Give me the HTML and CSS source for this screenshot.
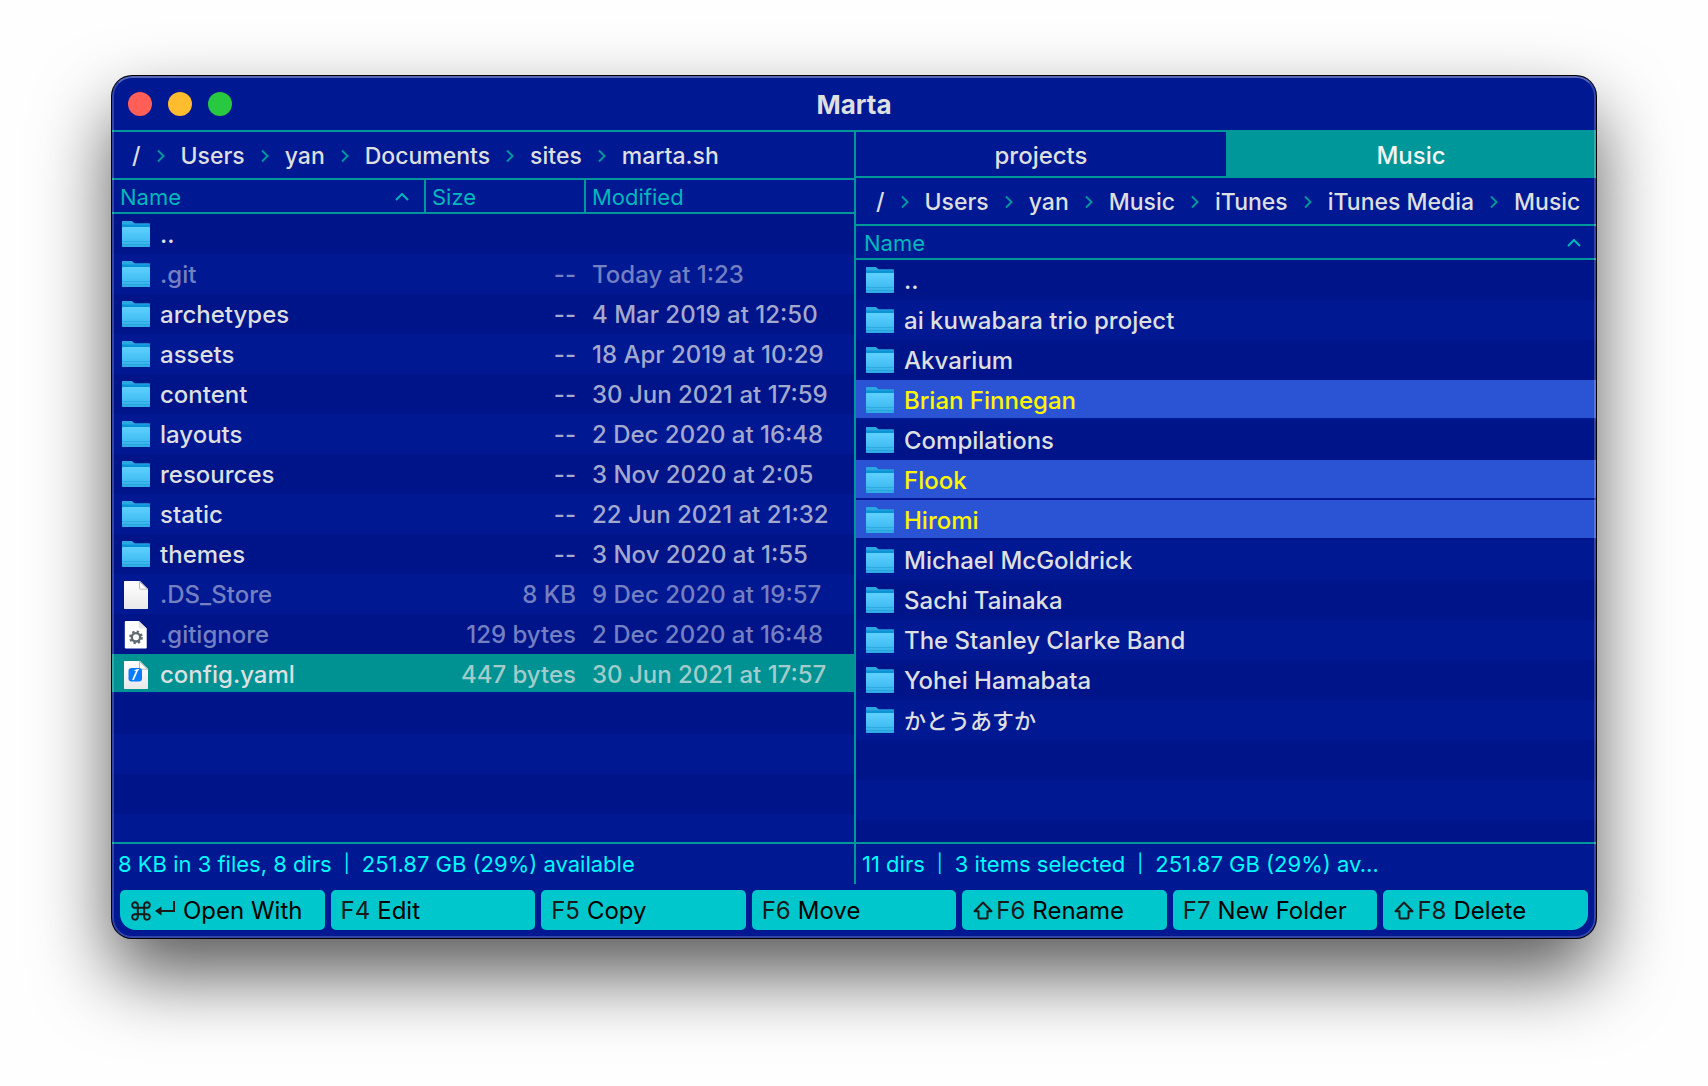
FILE: index.html
```html
<!DOCTYPE html>
<html lang="en">
<head>
<meta charset="utf-8">
<title>Marta</title>
<link rel="stylesheet" href="styles.css">
</head>
<body>
<svg class="sprite" aria-hidden="true">
  <defs>
    <linearGradient id="folder-front" x1="0" y1="0" x2="0" y2="1">
      <stop offset="0" stop-color="#5fd0ff"/>
      <stop offset="0.7" stop-color="#41bdf2"/>
      <stop offset="1" stop-color="#2eaae4"/>
    </linearGradient>
    <linearGradient id="paper" x1="0" y1="0" x2="0" y2="1">
      <stop offset="0" stop-color="#ffffff"/>
      <stop offset="1" stop-color="#e9e9e9"/>
    </linearGradient>
  </defs>
  <symbol id="folder" viewBox="0 1 28 28">
    <path d="M1 1h8.500c1.200 0 2 2.500 3.500 2.500h14c.6 0 1 .4 1 1V25H0V2c0-.6.4-1 1-1z" fill="#0a93d8"/>
    <path d="M1 1h8.500c1.200 0 2 2.500 3.500 2.500h14c.6 0 1 .4 1 1H0V2c0-.6.4-1 1-1z" fill="#2da7e0"/>
    <path d="M0 8c0-.8.500-1 1-1h26c.500 0 1 .2 1 1v18c0 .6-.4 1-1 1H1c-.6 0-1-.4-1-1z" fill="url(#folder-front)"/>
    <path d="M0 21.500h28M0 24.500h28" stroke="#1f98d2" stroke-width="1" opacity=".5"/>
  </symbol>
  <symbol id="file" viewBox="0 0 28 28">
    <path d="M3 0h15l8 8v19c0 .6-.4 1-1 1H3c-.6 0-1-.4-1-1V1c0-.6.4-1 1-1z" fill="url(#paper)"/>
    <path d="M17.500.500V7c0 .8.4 1.200 1.200 1.200H25.500z" fill="#fff" stroke="#b9b9b9" stroke-width="1"/>
  </symbol>
  <symbol id="file-gear" viewBox="0 0 28 30">
    <path d="M3 0h14l8.500 8v20.500c0 .6-.4 1-1 1H3c-.6 0-1-.4-1-1V1c0-.6.4-1 1-1z" fill="#fff"/>
    <path d="M17 0v6c0 1.200.8 2 2 2h6.500z" fill="#e4e4e4"/>
    <circle cx="14" cy="17.500" r="4.500" fill="none" stroke="#5f6b73" stroke-width="2.600"/>
    <circle cx="14" cy="17.500" r="6.200" fill="none" stroke="#5f6b73" stroke-width="2.400" stroke-dasharray="2.435 2.435"/>
  </symbol>
  <symbol id="file-code" viewBox="0 0 28 28">
    <path d="M3 0h15l8 8v19c0 .6-.4 1-1 1H3c-.6 0-1-.4-1-1V1c0-.6.4-1 1-1z" fill="url(#paper)"/>
    <path d="M17.500.500V7c0 .8.4 1.200 1.200 1.200H25.500z" fill="#fff" stroke="#b9b9b9" stroke-width="1"/>
    <rect x="6.500" y="7" width="13.500" height="13.500" rx="3" fill="#0a7bff"/>
    <path d="M15.500 8.500L11 19" fill="none" stroke="#fff" stroke-width="1.800"/>
    <path d="M12.500 9.500l4.500-1" fill="none" stroke="#fff" stroke-width="1.200"/>
  </symbol>
  <symbol id="chevron" viewBox="0 0 8 14">
    <path d="M1 1.500L6.500 7 1 12.500" fill="none" stroke="currentColor" stroke-width="2"/>
  </symbol>
  <symbol id="sort" viewBox="0 0 14 8">
    <path d="M1 7l6-6 6 6" fill="none" stroke="currentColor" stroke-width="2"/>
  </symbol>
  <symbol id="command" viewBox="0 0 20 20">
    <path d="M6.800 6.800h6.400v6.400H6.800zM6.800 6.800H4.300A2.800 2.800 0 1 1 6.800 4.200zM13.200 6.800V4.200a2.800 2.800 0 1 1 2.500 2.600zM13.200 13.200h2.500a2.800 2.800 0 1 1-2.500 2.600zM6.800 13.200v2.600a2.800 2.800 0 1 1-2.500-2.600z" fill="none" stroke="currentColor" stroke-width="2"/>
  </symbol>
  <symbol id="return" viewBox="0 0 20 20">
    <path d="M19 0v10H4" fill="none" stroke="currentColor" stroke-width="2"/>
    <path d="M0 10l6.500-4.500v9z" fill="currentColor"/>
  </symbol>
  <symbol id="shift" viewBox="0 0 20 20">
    <path d="M10 1.500l8.500 8.700h-4v6.300a1 1 0 0 1-1 1h-7a1 1 0 0 1-1-1v-6.300h-4z" fill="none" stroke="currentColor" stroke-width="2" stroke-linejoin="round"/>
  </symbol>
</svg>

<main class="window">
  <header class="titlebar">
    <div class="lights">
      <button class="light light-close" aria-label="Close"></button>
      <button class="light light-minimize" aria-label="Minimize"></button>
      <button class="light light-zoom" aria-label="Zoom"></button>
    </div>
    <h1 class="title">Marta</h1>
  </header>

  <div class="panes">
    <section class="pane">
      <nav class="path">
        <a href="#">/</a><svg class="sep"><use href="#chevron"/></svg>
        <a href="#">Users</a><svg class="sep"><use href="#chevron"/></svg>
        <a href="#">yan</a><svg class="sep"><use href="#chevron"/></svg>
        <a href="#">Documents</a><svg class="sep"><use href="#chevron"/></svg>
        <a href="#">sites</a><svg class="sep"><use href="#chevron"/></svg>
        <a href="#">marta.sh</a>
      </nav>
      <div class="listing">
        <table class="files">
          <colgroup><col class="col-name"><col class="col-size"><col></colgroup>
          <thead>
            <tr>
              <th scope="col"><span class="head">Name<svg class="sort"><use href="#sort"/></svg></span></th>
              <th scope="col">Size</th>
              <th scope="col">Modified</th>
            </tr>
          </thead>
          <tbody>
            <tr><td><span class="entry"><svg class="icon"><use href="#folder"/></svg>..</span></td><td></td><td></td></tr>
            <tr class="hidden-file"><td><span class="entry"><svg class="icon"><use href="#folder"/></svg>.git</span></td><td class="size">--</td><td>Today at 1:23</td></tr>
            <tr><td><span class="entry"><svg class="icon"><use href="#folder"/></svg>archetypes</span></td><td class="size">--</td><td>4 Mar 2019 at 12:50</td></tr>
            <tr><td><span class="entry"><svg class="icon"><use href="#folder"/></svg>assets</span></td><td class="size">--</td><td>18 Apr 2019 at 10:29</td></tr>
            <tr><td><span class="entry"><svg class="icon"><use href="#folder"/></svg>content</span></td><td class="size">--</td><td>30 Jun 2021 at 17:59</td></tr>
            <tr><td><span class="entry"><svg class="icon"><use href="#folder"/></svg>layouts</span></td><td class="size">--</td><td>2 Dec 2020 at 16:48</td></tr>
            <tr><td><span class="entry"><svg class="icon"><use href="#folder"/></svg>resources</span></td><td class="size">--</td><td>3 Nov 2020 at 2:05</td></tr>
            <tr><td><span class="entry"><svg class="icon"><use href="#folder"/></svg>static</span></td><td class="size">--</td><td>22 Jun 2021 at 21:32</td></tr>
            <tr><td><span class="entry"><svg class="icon"><use href="#folder"/></svg>themes</span></td><td class="size">--</td><td>3 Nov 2020 at 1:55</td></tr>
            <tr class="hidden-file"><td><span class="entry"><svg class="icon"><use href="#file"/></svg>.DS_Store</span></td><td class="size">8 KB</td><td>9 Dec 2020 at 19:57</td></tr>
            <tr class="hidden-file"><td><span class="entry"><svg class="icon"><use href="#file-gear"/></svg>.gitignore</span></td><td class="size">129 bytes</td><td>2 Dec 2020 at 16:48</td></tr>
            <tr class="current"><td><span class="entry"><svg class="icon"><use href="#file-code"/></svg>config.yaml</span></td><td class="size">447 bytes</td><td>30 Jun 2021 at 17:57</td></tr>
          </tbody>
        </table>
      </div>
      <footer class="status"><span>8 KB in 3 files, 8 dirs</span><span class="bar">|</span><span>251.87 GB (29%) available</span></footer>
    </section>

    <section class="pane">
      <div class="tabs" role="tablist">
        <button class="tab" role="tab" aria-selected="false">projects</button>
        <button class="tab tab-active" role="tab" aria-selected="true">Music</button>
      </div>
      <nav class="path">
        <a href="#">/</a><svg class="sep"><use href="#chevron"/></svg>
        <a href="#">Users</a><svg class="sep"><use href="#chevron"/></svg>
        <a href="#">yan</a><svg class="sep"><use href="#chevron"/></svg>
        <a href="#">Music</a><svg class="sep"><use href="#chevron"/></svg>
        <a href="#">iTunes</a><svg class="sep"><use href="#chevron"/></svg>
        <a href="#">iTunes Media</a><svg class="sep"><use href="#chevron"/></svg>
        <a href="#">Music</a>
      </nav>
      <div class="listing">
        <table class="files">
          <thead>
            <tr><th scope="col"><span class="head">Name<svg class="sort"><use href="#sort"/></svg></span></th></tr>
          </thead>
          <tbody>
            <tr><td><span class="entry"><svg class="icon"><use href="#folder"/></svg>..</span></td></tr>
            <tr><td><span class="entry"><svg class="icon"><use href="#folder"/></svg>ai kuwabara trio project</span></td></tr>
            <tr><td><span class="entry"><svg class="icon"><use href="#folder"/></svg>Akvarium</span></td></tr>
            <tr class="selected"><td><span class="entry"><svg class="icon"><use href="#folder"/></svg>Brian Finnegan</span></td></tr>
            <tr><td><span class="entry"><svg class="icon"><use href="#folder"/></svg>Compilations</span></td></tr>
            <tr class="selected"><td><span class="entry"><svg class="icon"><use href="#folder"/></svg>Flook</span></td></tr>
            <tr class="selected"><td><span class="entry"><svg class="icon"><use href="#folder"/></svg>Hiromi</span></td></tr>
            <tr><td><span class="entry"><svg class="icon"><use href="#folder"/></svg>Michael McGoldrick</span></td></tr>
            <tr><td><span class="entry"><svg class="icon"><use href="#folder"/></svg>Sachi Tainaka</span></td></tr>
            <tr><td><span class="entry"><svg class="icon"><use href="#folder"/></svg>The Stanley Clarke Band</span></td></tr>
            <tr><td><span class="entry"><svg class="icon"><use href="#folder"/></svg>Yohei Hamabata</span></td></tr>
            <tr><td><span class="entry" lang="ja"><svg class="icon"><use href="#folder"/></svg>かとうあすか</span></td></tr>
          </tbody>
        </table>
      </div>
      <footer class="status"><span>11 dirs</span><span class="bar">|</span><span>3 items selected</span><span class="bar">|</span><span>251.87 GB (29%) av…</span></footer>
    </section>
  </div>

  <div class="actions">
    <button class="action"><span class="key"><svg class="glyph"><use href="#command"/></svg><svg class="glyph"><use href="#return"/></svg></span>Open With</button>
    <button class="action"><span class="key">F4</span>Edit</button>
    <button class="action"><span class="key">F5</span>Copy</button>
    <button class="action"><span class="key">F6</span>Move</button>
    <button class="action"><span class="key"><svg class="glyph"><use href="#shift"/></svg>F6</span>Rename</button>
    <button class="action"><span class="key">F7</span>New Folder</button>
    <button class="action"><span class="key"><svg class="glyph"><use href="#shift"/></svg>F8</span>Delete</button>
  </div>
</main>
</body>
</html>
```
FILE: styles.css
```css
:root {
  --blue: #001892;
  --blue-dark: #001489;
  --teal: #00979b;
  --text: #dedfe0;
}

* {
  box-sizing: border-box;
}

body {
  display: flex;
  min-height: 100vh;
  margin: 0;
  padding: 76px 112px 148px;
  background: #fefefe;
  color: var(--text);
  font: 450 24px/34px Inter, "Noto Sans CJK JP", sans-serif;
}

button {
  border: 0;
  padding: 0;
  background: none;
  color: inherit;
  font: inherit;
}

a {
  color: inherit;
  text-decoration: none;
}

.sprite {
  position: absolute;
  width: 0;
  height: 0;
}

.window {
  position: relative;
  display: flex;
  flex: 1;
  flex-direction: column;
  min-width: 0;
  border-radius: 20px;
  background: var(--blue);
  box-shadow: 0 0 0 1px #000, 0 36px 76px rgba(0, 0, 0, .66);
  overflow: hidden;
}

/* translucent rim drawn over the whole window */
.window::after {
  content: "";
  position: absolute;
  inset: 0;
  border: 2px solid rgba(255, 255, 255, .2);
  border-top-color: rgba(255, 255, 255, .34);
  border-radius: 20px;
  pointer-events: none;
}

.titlebar {
  display: grid;
  grid-template-columns: 1fr auto 1fr;
  align-items: center;
  height: 56px;
  padding: 2px 16px 0;
  border-bottom: 2px solid var(--teal);
}

.lights {
  display: flex;
  gap: 16px;
}

.light {
  width: 24px;
  height: 24px;
  border-radius: 50%;
}

.light-close { background: #ff5f57; }
.light-minimize { background: #febc2e; }
.light-zoom { background: #28c840; }

.title {
  margin: 0;
  padding-top: 2px;
  font-size: 26px;
  font-weight: 700;
}

.panes {
  display: grid;
  flex: 1;
  grid-template-columns: 1fr 1fr;
}

.pane {
  display: flex;
  flex-direction: column;
  min-width: 0;
}

.pane + .pane {
  border-left: 2px solid var(--teal);
}

.tabs {
  display: grid;
  grid-template-columns: 1fr 1fr;
  height: 46px;
}

.tab {
  padding-top: 4px;
  border-bottom: 2px solid var(--teal);
}

.tab-active {
  margin-top: -2px;
  padding-top: 6px;
  background: var(--teal);
  color: #f4f4f4;
}

.path {
  display: flex;
  gap: 16px;
  align-items: center;
  height: 48px;
  padding: 2px 20px 0;
  border-bottom: 2px solid var(--teal);
  font-size: 23px;
  font-weight: 500;
  white-space: nowrap;
}

.sep {
  flex: none;
  width: 8px;
  height: 14px;
  color: var(--teal);
}

.listing {
  flex: 1;
  background: repeating-linear-gradient(var(--blue-dark) 0 40px, var(--blue) 40px 80px) 0 34px;
}

.files {
  width: 100%;
  border-collapse: separate;
  border-spacing: 0;
  table-layout: fixed;
}

.col-name { width: 314px; }
.col-size { width: 160px; }

.files th {
  height: 34px;
  padding: 2px 6px 0;
  border-right: 2px solid var(--teal);
  border-bottom: 2px solid var(--teal);
  background: var(--blue);
  color: #00b7bb;
  font-size: 22px;
  font-weight: 400;
  line-height: 30px;
  text-align: left;
}

.files th:first-child {
  padding-left: 8px;
}

.files th:last-child {
  border-right: 0;
}

.head {
  display: flex;
  align-items: center;
  justify-content: space-between;
  padding-right: 9px;
}

.sort {
  width: 14px;
  height: 8px;
}

.files td {
  height: 40px;
  padding: 4px 10px 0 6px;
  border-bottom: 2px solid transparent;
  background-clip: padding-box;
  color: #a3a9cd;
  white-space: nowrap;
}

.files td:first-child {
  padding-left: 10px;
  color: var(--text);
}

.files .size {
  text-align: right;
}

.entry {
  display: flex;
  gap: 10px;
  align-items: center;
}

.entry:lang(ja) {
  font-size: 22px;
}

.icon {
  flex: none;
  width: 28px;
  height: 28px;
}

.files .hidden-file td,
.files .hidden-file td:first-child {
  color: #7480c1;
}

.files .current td {
  background-color: #009292;
  color: #a2cccc;
}

.files .current td:first-child {
  color: var(--text);
}

.files .selected td {
  background-color: #2b54d4;
  color: #fff500;
}

.status {
  display: flex;
  gap: 12px;
  height: 42px;
  padding: 0 6px;
  border-top: 2px solid var(--teal);
  color: #00fafd;
  font-size: 22px;
  font-weight: 400;
  line-height: 40px;
  white-space: nowrap;
}

.bar {
  font-size: 18px;
}

.actions {
  display: grid;
  grid-template-columns: repeat(7, 1fr);
  gap: 6px;
  padding: 6px 8px 8px;
}

.action {
  display: flex;
  gap: 7px;
  align-items: center;
  height: 40px;
  padding: 2px 10px 0;
  border-radius: 5px;
  background: #00c7cb;
  color: #000;
  font-weight: 400;
  white-space: nowrap;
}

.action:first-child {
  border-bottom-left-radius: 16px;
}

.action:last-child {
  border-bottom-right-radius: 16px;
}

.key {
  display: flex;
  gap: 2px;
  align-items: center;
  color: #1a1a1a;
}

.glyph {
  width: 22px;
  height: 20px;
}
```
